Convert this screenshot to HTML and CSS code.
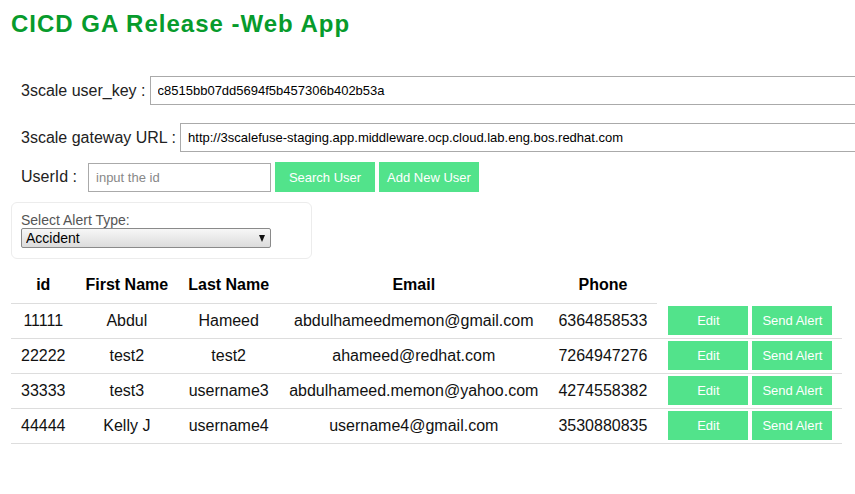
FILE: index.html
```html
<!DOCTYPE html>
<html>
<head>
<meta charset="utf-8">
<title>CICD GA Release -Web App</title>
<link rel="stylesheet" href="styles.css">
</head>
<body>
<div class="page">
  <h2 class="title">CICD GA Release -Web App</h2>

  <div class="form">
    <div class="row row-key">
      <label class="label">3scale user_key :</label>
      <input class="field field-wide" type="text" value="c8515bb07dd5694f5b457306b402b53a">
    </div>
    <div class="row row-url">
      <label class="label">3scale gateway URL :</label>
      <input class="field field-wide" type="text" value="http://3scalefuse-staging.app.middleware.ocp.cloud.lab.eng.bos.redhat.com">
    </div>
    <div class="row row-user">
      <label class="label label-user">UserId :</label>
      <input class="field field-id" type="text" placeholder="input the id">
      <button class="btn btn-top">Search User</button>
      <button class="btn btn-top">Add New User</button>
    </div>
  </div>

  <div class="alert-panel">
    <div class="alert-label">Select Alert Type:</div>
    <div class="select-wrap">
      <select class="select">
        <option>Accident</option>
        <option>Fire</option>
        <option>Medical</option>
      </select>
      <span class="select-arrow"></span>
    </div>
  </div>

  <table class="users">
    <thead>
      <tr>
        <th>id</th>
        <th>First Name</th>
        <th>Last Name</th>
        <th>Email</th>
        <th>Phone</th>
      </tr>
    </thead>
    <tbody>
      <tr>
        <td>11111</td><td>Abdul</td><td>Hameed</td><td>abdulhameedmemon@gmail.com</td><td>6364858533</td>
        <td class="actions"><button class="btn btn-row">Edit</button><button class="btn btn-row">Send Alert</button></td>
      </tr>
      <tr>
        <td>22222</td><td>test2</td><td>test2</td><td>ahameed@redhat.com</td><td>7264947276</td>
        <td class="actions"><button class="btn btn-row">Edit</button><button class="btn btn-row">Send Alert</button></td>
      </tr>
      <tr>
        <td>33333</td><td>test3</td><td>username3</td><td>abdulhameed.memon@yahoo.com</td><td>4274558382</td>
        <td class="actions"><button class="btn btn-row">Edit</button><button class="btn btn-row">Send Alert</button></td>
      </tr>
      <tr>
        <td>44444</td><td>Kelly J</td><td>username4</td><td>username4@gmail.com</td><td>3530880835</td>
        <td class="actions"><button class="btn btn-row">Edit</button><button class="btn btn-row">Send Alert</button></td>
      </tr>
    </tbody>
  </table>
</div>
</body>
</html>
```

FILE: styles.css
```css
* { box-sizing: border-box; }

html, body {
  margin: 0;
  padding: 0;
  background: #fff;
  overflow: hidden;
}

body {
  font-family: "Liberation Sans", Arial, sans-serif;
  color: #222;
}

.page {
  padding: 0 0 0 11px;
}

.title {
  margin: 9px 0 0 0;
  font-size: 24px;
  line-height: 29px;
  font-weight: bold;
  letter-spacing: 1px;
  color: #079b2c;
}

.form {
  padding: 38px 0 0 10px;
}

.row {
  display: flex;
  align-items: center;
}

.row-url { margin-top: 18px; }
.row-user { margin-top: 10px; }

.label {
  font-size: 16px;
  color: #222;
  margin-right: 4px;
  white-space: nowrap;
}

.label-user {
  margin-right: 11px;
}

.field {
  height: 29px;
  border: 1px solid #aaa;
  padding: 0 7px;
  font-family: "Liberation Sans", Arial, sans-serif;
  font-size: 13px;
  color: #000;
  outline: none;
  background: #fff;
}

.field-wide {
  flex: 1 0 auto;
  min-width: 720px;
}

.field-id {
  width: 183px;
  flex: 0 0 183px;
}

.field::placeholder { color: #888; }

.btn {
  background: #52e38b;
  border: none;
  color: #fff;
  font-family: "Liberation Sans", Arial, sans-serif;
  font-size: 13px;
  padding: 0;
  cursor: pointer;
}

.btn-top {
  width: 100px;
  height: 30px;
  margin-left: 4px;
}

.alert-panel {
  margin-top: 10px;
  width: 301px;
  height: 57px;
  border: 1px solid #ececec;
  border-radius: 6px;
  padding: 9px 0 0 9px;
}

.alert-label {
  font-size: 14px;
  line-height: 16px;
  color: #555;
}

.select-wrap {
  position: relative;
  width: 250px;
  height: 20px;
}

.select {
  appearance: none;
  -webkit-appearance: none;
  width: 250px;
  height: 20px;
  border: 1px solid #8a8a8a;
  border-radius: 2px;
  background: linear-gradient(#f7f7f7, #dcdcdc);
  font-family: "Liberation Sans", Arial, sans-serif;
  font-size: 14px;
  color: #000;
  padding: 0 0 0 4px;
  outline: none;
}

.select-arrow {
  position: absolute;
  right: 6px;
  top: 7px;
  width: 0;
  height: 0;
  border-left: 3.5px solid transparent;
  border-right: 3.5px solid transparent;
  border-top: 7px solid #111;
  pointer-events: none;
}

.users {
  margin-top: 9px;
  border-collapse: collapse;
  font-size: 16px;
  color: #111;
}

.users th,
.users td {
  height: 35px;
  padding: 0 10px;
  text-align: center;
  vertical-align: middle;
  white-space: nowrap;
  border-bottom: 1px solid #dddddd;
}

.users th {
  font-weight: bold;
  color: #000;
}

.users td.actions {
  padding: 0 10px 0 11px;
}

.btn-row {
  width: 80px;
  height: 29px;
  display: inline-block;
  vertical-align: middle;
}

.btn-row + .btn-row {
  margin-left: 4px;
}
```
